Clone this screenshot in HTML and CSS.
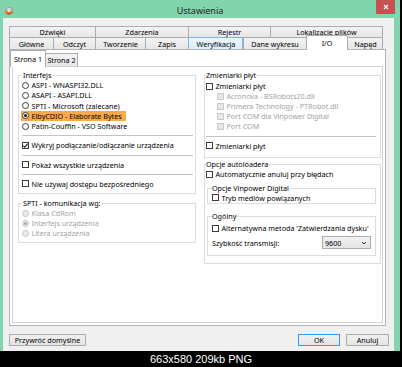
FILE: index.html
```html
<!DOCTYPE html>
<html lang="pl">
<head>
    <meta charset="UTF-8">
    <meta name="viewport" content="width=device-width, initial-scale=1.0">
    <title>Ustawienia</title>
    <link rel="stylesheet" href="styles.css">
</head>
<body>
    <div class="window">
        <div class="titlebar">
            <svg class="app-icon" viewBox="0 0 8 8" width="8" height="8">
                <defs>
                    <linearGradient id="disc" x1="0" y1="0" x2="0" y2="1">
                        <stop offset="0" stop-color="#f4f4f4"/>
                        <stop offset="0.45" stop-color="#b9b9b9"/>
                        <stop offset="0.55" stop-color="#f29a2e"/>
                        <stop offset="1" stop-color="#c2401c"/>
                    </linearGradient>
                </defs>
                <circle cx="4" cy="4" r="3.6" fill="url(#disc)" stroke="#7a6a5a" stroke-width="0.5"/>
                <circle cx="4" cy="4" r="0.9" fill="#fff"/>
            </svg>
            <div class="title">Ustawienia</div>
            <div class="close">
                <svg viewBox="0 0 6 6" width="6" height="6"><path d="M1 1L5 5M5 1L1 5" stroke="#fff" stroke-width="1.3"/></svg>
            </div>
        </div>

        <div class="client">
            <div class="tabs">
                <div class="tab-row row1">
                    <div class="tab">Dźwięki</div>
                    <div class="tab">Zdarzenia</div>
                    <div class="tab">Rejestr</div>
                    <div class="tab">Lokalizacje plików</div>
                </div>
                <div class="tab-row row2">
                    <div class="tab">Główne</div>
                    <div class="tab">Odczyt</div>
                    <div class="tab">Tworzenie</div>
                    <div class="tab">Zapis</div>
                    <div class="tab hover">Weryfikacja</div>
                    <div class="tab">Dane wykresu</div>
                    <div class="tab active">I/O</div>
                    <div class="tab after-active">Napęd</div>
                </div>
            </div>

            <div class="panel">
                <div class="subtabs">
                    <div class="subtab active">Strona 1</div>
                    <div class="subtab">Strona 2</div>
                </div>

                <div class="subpanel">
                    <!-- left column -->
                    <div class="col">
                        <fieldset class="group interfejs">
                            <legend>Interfejs</legend>
                            <div class="opt"><span class="radio"></span>ASPI - WNASPI32.DLL</div>
                            <div class="opt"><span class="radio"></span>ASAPI - ASAPI.DLL</div>
                            <div class="opt"><span class="radio"></span>SPTI - Microsoft (zalecane)</div>
                            <div class="opt hl"><span class="radio on"></span>ElbyCDIO - Elaborate Bytes</div>
                            <div class="opt"><span class="radio"></span>Patin-Couffin - VSO Software</div>
                            <div class="sep"></div>
                            <div class="opt"><span class="cb checked"><svg viewBox="0 0 7 7" width="7" height="7"><path d="M1.3 3.6L2.8 5.1L5.8 1.6" fill="none" stroke="#222" stroke-width="1.1"/></svg></span>Wykryj podłączanie/odłączanie urządzenia</div>
                            <div class="sep"></div>
                            <div class="opt"><span class="cb"></span>Pokaż wszystkie urządzenia</div>
                            <div class="sep"></div>
                            <div class="opt"><span class="cb"></span>Nie używaj dostępu bezpośredniego</div>
                        </fieldset>

                        <fieldset class="group spti">
                            <legend>SPTI - komunikacja wg:</legend>
                            <div class="opt off"><span class="radio"></span>Klasa CdRom</div>
                            <div class="opt off"><span class="radio on"></span>Interfejs urządzenia</div>
                            <div class="opt off"><span class="radio"></span>Litera urządzenia</div>
                        </fieldset>
                    </div>

                    <!-- right column -->
                    <div class="col">
                        <fieldset class="group right changers">
                            <legend>Zmieniarki płyt</legend>
                            <div class="opt"><span class="cb"></span>Zmieniarki płyt</div>
                            <div class="opt off sub"><span class="cb"></span>Acronova - BSRobots20.dll</div>
                            <div class="opt off sub"><span class="cb"></span>Primera Technology - PTRobot.dll</div>
                            <div class="opt off sub"><span class="cb"></span>Port COM dla Vinpower Digital</div>
                            <div class="opt off sub"><span class="cb"></span>Port COM</div>
                            <div class="sep"></div>
                            <div class="opt"><span class="cb"></span>Zmieniarki płyt</div>
                        </fieldset>

                        <fieldset class="group right autoloader">
                            <legend>Opcje autoloadera</legend>
                            <div class="opt"><span class="cb"></span>Automatycznie anuluj przy błędach</div>

                            <fieldset class="group inner vinpower">
                                <legend>Opcje Vinpower Digital</legend>
                                <div class="opt"><span class="cb"></span>Tryb mediów powiązanych</div>
                            </fieldset>

                            <fieldset class="group inner general">
                                <legend>Ogólny</legend>
                                <div class="opt"><span class="cb"></span>Alternatywna metoda 'Zatwierdzania dysku'</div>
                                <div class="speed">
                                    <span>Szybkość transmisji:</span>
                                    <div class="select">
                                        <span>9600</span>
                                        <svg viewBox="0 0 6 4" width="6" height="4"><path d="M1 1L3 3L5 1" fill="none" stroke="#333" stroke-width="1"/></svg>
                                    </div>
                                </div>
                            </fieldset>
                        </fieldset>
                    </div>
                </div>
            </div>

            <div class="buttons">
                <div class="btn restore">Przywróć domyślne</div>
                <div class="btn-group">
                    <div class="btn ok">OK</div>
                    <div class="btn cancel">Anuluj</div>
                </div>
            </div>
        </div>
    </div>
    <div class="caption">663x580 209kb PNG</div>
</body>
</html>
```

FILE: styles.css
```css
/* --- Page and window frame --- */
* {
    box-sizing: border-box;
}

body {
    margin: 0;
    width: 402px;
    height: 367px;
    overflow: hidden;
    background-color: #000;
    font-family: 'Noto Sans', 'DejaVu Sans', sans-serif;
    font-size: 7.2px;
    color: #000;
}

.window {
    width: 400px;
    height: 351px;
    background-color: #80d4ae;
    display: flex;
    flex-direction: column;
}

.titlebar {
    height: 18px;
    flex: none;
    display: grid;
    grid-template-columns: 1fr auto 1fr;
    align-items: center;
    padding: 0 5px;
}

.app-icon {
    margin-top: 3px;
}

.title {
    margin-top: 3px;
    font-size: 9px;
    color: #222;
}

.close {
    justify-self: end;
    align-self: start;
    width: 19px;
    height: 14px;
    background-color: #c75050;
    display: flex;
    align-items: center;
    justify-content: center;
}

/* --- Grey client area --- */
.client {
    flex: 1;
    margin: 0 6px 0 3px;
    padding: 8px 5px 0 6px;
    background-color: #f0f0f0;
    display: flex;
    flex-direction: column;
}

/* --- Main tab strip (two rows) --- */
.tab-row {
    display: grid;
    width: 374px;
}

.row1 {
    grid-template-columns: 86px 93px 82px 113px;
    height: 11px;
}

.row2 {
    grid-template-columns: 44px 42px 50px 43px 55px 63px 42px 35px;
    height: 12px;
}

.tab {
    border-top: 1px solid #acacac;
    border-left: 1px solid #acacac;
    background: linear-gradient(#f3f3f3, #e6e6e6);
    display: flex;
    align-items: center;
    justify-content: center;
    white-space: nowrap;
}

.tab:last-child {
    border-right: 1px solid #acacac;
}

.tab.hover {
    background: linear-gradient(#ecf4fc, #dcecfc);
    border-color: #7eb4ea;
    box-shadow: inset -1px 0 #7eb4ea;
}

.tab.active {
    position: relative;
    z-index: 1;
    margin-top: -2px;
    margin-bottom: -1px;
    background: #fff;
    border-right: 1px solid #acacac;
}

.tab.after-active {
    border-left-color: transparent;
}

/* --- Tab page --- */
.panel {
    width: 377px;
    height: 277px;
    flex: none;
    border: 1px solid #b4b4b4;
    background-color: #fff;
    padding: 0 2px 2px;
    display: flex;
    flex-direction: column;
}

.subtabs {
    display: flex;
    align-items: flex-end;
    height: 16px;
    flex: none;
    margin-left: -2px;
}

.subtab {
    width: 32px;
    height: 13px;
    border-top: 1px solid #acacac;
    border-right: 1px solid #acacac;
    background: linear-gradient(#f3f3f3, #e6e6e6);
    display: flex;
    align-items: center;
    justify-content: center;
    white-space: nowrap;
}

.subtab.active {
    position: relative;
    z-index: 1;
    width: 36px;
    height: 17px;
    margin-bottom: -1px;
    border-left: 1px solid #acacac;
    background: #fff;
}

.subpanel {
    flex: 1;
    border: 1px solid #d2d2d2;
    display: grid;
    grid-template-columns: 178px 177px;
    column-gap: 8px;
    align-items: start;
    padding: 4px 0 0 5px;
}

.col {
    display: flex;
    flex-direction: column;
}

/* --- Group boxes --- */
.group {
    margin: 0;
    min-width: 0;
    border: 1px solid #dcdcdc;
    padding: 0 2px 4px 3px;
}

.group legend {
    padding: 0 1px;
    line-height: 9px;
    white-space: nowrap;
}

.group.right {
    padding: 0 4px 0 1px;
}

.group.right legend {
    padding: 0;
}

.changers {
    padding-top: 1px !important;
    padding-bottom: 6px !important;
}

.autoloader {
    margin-top: 2.5px;
    padding-bottom: 7px !important;
}

.group.inner {
    margin-left: 1px;
    padding: 0 4px 0 4px;
}

.vinpower {
    margin-top: 5px;
    padding-bottom: 1px !important;
}

.vinpower .opt {
    height: 9px;
}

.general {
    margin-top: 7.5px;
    padding-top: 2.5px !important;
    padding-bottom: 5.5px !important;
}

.spti {
    margin-top: 5px;
}

/* --- Options (radio / checkbox rows) --- */
.opt {
    display: flex;
    align-items: center;
    gap: 2.5px;
    height: 10px;
    white-space: nowrap;
}

.interfejs .opt {
    height: 10.25px;
}

.opt.hl {
    width: fit-content;
    margin-left: -1px;
    padding: 0 4px 0 1px;
    background-color: #f9a84a;
}

.opt.sub {
    margin-left: 11px;
}

.opt.off {
    color: #a2a2a2;
}

.radio {
    width: 7px;
    height: 7px;
    flex: none;
    border: 1px solid #3c3c3c;
    border-radius: 50%;
    background-color: #fff;
    display: flex;
    align-items: center;
    justify-content: center;
}

.radio.on::after {
    content: "";
    width: 3px;
    height: 3px;
    border-radius: 50%;
    background-color: #1a1a1a;
}

.off .radio {
    border-color: #c4c4c4;
    background-color: #eaeaea;
}

.off .radio.on::after {
    background-color: #a8a8a8;
}

.cb {
    width: 7px;
    height: 7px;
    flex: none;
    border: 1px solid #3c3c3c;
    background-color: #fff;
    display: flex;
}

.cb svg {
    margin: -1px;
}

.off .cb {
    border-color: #cacaca;
    background-color: #e6e6e6;
}

.sep {
    height: 1px;
    margin: 4px 0;
    background-color: #c4c4c4;
}

.interfejs .sep:first-of-type {
    margin-top: 4.25px;
}

.changers .sep {
    margin: 4.5px 0 4px;
}

/* --- Transfer speed row --- */
.speed {
    display: flex;
    justify-content: space-between;
    align-items: center;
    margin-top: 3px;
    height: 13px;
}

.select {
    width: 49px;
    height: 13px;
    border: 1px solid #acacac;
    background: linear-gradient(#f2f2f2, #e3e3e3);
    display: flex;
    align-items: center;
    justify-content: space-between;
    padding: 0 3px 0 2px;
}

/* --- Bottom buttons --- */
.buttons {
    display: flex;
    justify-content: space-between;
    margin-top: 8px;
}

.btn-group {
    display: flex;
    gap: 6px;
}

.btn {
    height: 12px;
    border: 1px solid #acacac;
    background: linear-gradient(#f0f0f0, #e5e5e5);
    display: flex;
    align-items: center;
    justify-content: center;
    white-space: nowrap;
}

.btn.restore {
    width: 77px;
}

.btn.ok {
    width: 42px;
    border-color: #3399ff;
}

.btn.cancel {
    width: 43px;
}

/* --- Image caption bar --- */
.caption {
    height: 16px;
    line-height: 16px;
    text-align: center;
    color: #fff;
    font-family: 'Liberation Sans', Arial, sans-serif;
    font-size: 11px;
}
```
